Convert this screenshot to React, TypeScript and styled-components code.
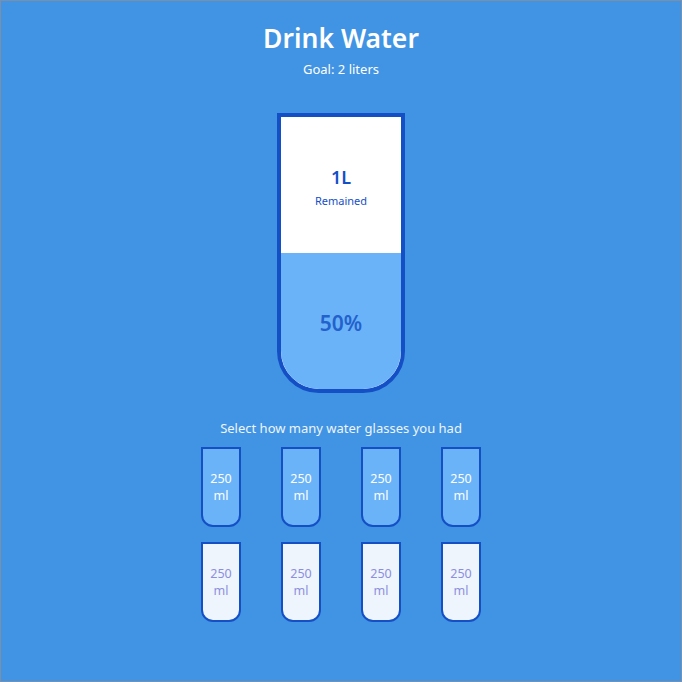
import styled, { createGlobalStyle } from 'styled-components';

const GlobalStyle = createGlobalStyle`
  html, body {
    margin: 0;
    padding: 0;
    background: #4094e3;
  }
  body {
    font-family: 'Noto Sans', 'Open Sans', sans-serif;
  }
`;

const Page = styled.div`
  box-sizing: border-box;
  min-height: 682px;
  border: 1px solid #7d8fa6;
  display: flex;
  flex-direction: column;
  align-items: center;
  color: #fff;
`;

const Title = styled.h1`
  margin: 20px 0 0;
  font-size: 26.5px;
  line-height: 34px;
  font-weight: 600;
`;

const Goal = styled.div`
  margin-top: 5px;
  font-size: 13px;
  line-height: 18px;
`;

const Cup = styled.div`
  margin-top: 35px;
  box-sizing: border-box;
  width: 128px;
  height: 280px;
  border: 4px solid #144fc6;
  border-radius: 0 0 42px 42px;
  background: #fff;
  overflow: hidden;
  display: flex;
  flex-direction: column;
`;

const Remained = styled.div`
  flex: 1;
  display: flex;
  flex-direction: column;
  align-items: center;
  justify-content: center;
  padding-top: 4px;
  color: #144fc6;
`;

const Liters = styled.span`
  font-size: 18px;
  line-height: 24px;
  font-weight: 600;
`;

const Small = styled.small`
  margin-top: 4px;
  font-size: 11px;
  line-height: 16px;
`;

const Percentage = styled.div`
  flex: 1;
  display: flex;
  align-items: center;
  justify-content: center;
  padding-top: 4px;
  background: #6ab3f8;
  color: #2361cc;
  font-size: 21px;
  font-weight: 600;
`;

const Text = styled.p`
  margin: 26px 0 0;
  font-size: 13px;
  line-height: 18px;
  color: #eef4fc;
`;

const Cups = styled.div`
  margin-top: 10px;
  display: grid;
  grid-template-columns: repeat(4, 40px);
  column-gap: 40px;
  row-gap: 15px;
`;

const SmallCup = styled.div<{ $full: boolean }>`
  box-sizing: border-box;
  width: 40px;
  height: 80px;
  border: 2px solid #144fc6;
  border-radius: 0 0 12px 12px;
  background: ${(p) => (p.$full ? '#6ab3f8' : '#eef5fc')};
  color: ${(p) => (p.$full ? '#fff' : '#8d8ee0')};
  display: flex;
  flex-direction: column;
  align-items: center;
  justify-content: center;
  font-size: 12.5px;
`;

const CupLine = styled.span`
  line-height: 17px;
`;

const glasses = [true, true, true, true, false, false, false, false];

export default function App() {
  return (
    <>
      <GlobalStyle />
      <Page>
        <Title>Drink Water</Title>
        <Goal>Goal: 2 liters</Goal>
        <Cup>
          <Remained>
            <Liters>1L</Liters>
            <Small>Remained</Small>
          </Remained>
          <Percentage>50%</Percentage>
        </Cup>
        <Text>Select how many water glasses you had</Text>
        <Cups>
          {glasses.map((full, i) => (
            <SmallCup key={i} $full={full}>
              <CupLine>250</CupLine>
              <CupLine>ml</CupLine>
            </SmallCup>
          ))}
        </Cups>
      </Page>
    </>
  );
}
